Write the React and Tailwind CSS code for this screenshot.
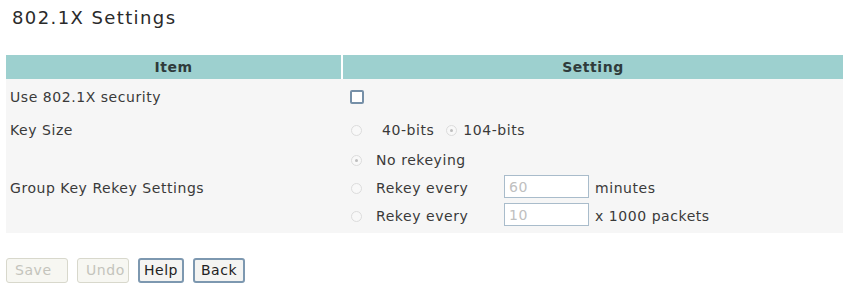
import { useState } from 'react';

function Radio({ checked }) {
  return (
    <span className="inline-flex w-[11px] h-[11px] rounded-full border border-[#dcdcdc] bg-[#f8f8f8] items-center justify-center shrink-0">
      {checked && <span className="w-[3px] h-[3px] rounded-full bg-[#bdbdbd]"></span>}
    </span>
  );
}

function Btn({ label, disabled, w }) {
  return (
    <button
      className={
        disabled
          ? `h-[25px] ${w} rounded-[3px] border border-[#d8d8cc] bg-[#f7f7f2] text-[#c4c4bc] text-left pl-[8px]`
          : `h-[25px] ${w} rounded-[3px] border-2 border-[#7d98b0] bg-[#f4f4f2] text-[#222] text-center`
      }
    >
      {label}
    </button>
  );
}

export default function App() {
  const [useSecurity, setUseSecurity] = useState(false);

  return (
    <div className="w-[853px] h-[301px] bg-white font-['DejaVu_Sans',sans-serif] text-[14px] tracking-[0.55px] text-[#3a3a3a]">
      <h1 className="pt-[6px] pl-[12px] text-[18px] tracking-[1.4px] text-[#2a2a2a] leading-[24px]">802.1X Settings</h1>

      <div className="mt-[25px] ml-[6px] w-[837px]">
        <div className="flex gap-[2px] h-[24px] font-bold text-[#2f3b3b]">
          <div className="w-[335px] bg-[#9dd0cf] flex items-center justify-center">Item</div>
          <div className="flex-1 bg-[#9dd0cf] flex items-center justify-center">Setting</div>
        </div>

        <div className="bg-[#f6f6f6] pb-[1px]">
          <div className="flex h-[36px] items-center">
            <div className="w-[337px] pl-[4px]">Use 802.1X security</div>
            <div className="pl-[7px]">
              <span
                onClick={() => setUseSecurity(!useSecurity)}
                className="block w-[14px] h-[14px] rounded-[2px] border-2 border-[#7690a8] bg-white"
              ></span>
            </div>
          </div>

          <div className="flex h-[30px] items-center">
            <div className="w-[337px] pl-[4px]">Key Size</div>
            <div className="pl-[8px] flex items-center">
              <Radio />
              <span className="ml-[20px]">40-bits</span>
              <span className="ml-[12px] flex">
                <Radio checked />
              </span>
              <span className="ml-[6px]">104-bits</span>
            </div>
          </div>

          <div className="flex h-[87px] items-center">
            <div className="w-[337px] pl-[4px]">Group Key Rekey Settings</div>
            <div className="pl-[8px] flex flex-col">
              <div className="flex items-center h-[28px]">
                <Radio checked />
                <span className="ml-[14px]">No rekeying</span>
              </div>
              <div className="flex items-center h-[28px]">
                <Radio />
                <span className="ml-[14px] w-[128px]">Rekey every</span>
                <input
                  disabled
                  defaultValue="60"
                  className="w-[85px] h-[23px] -mt-[4px] border border-[#a9bccb] bg-white text-[#c0c0c0] pl-[4px] outline-none"
                />
                <span className="ml-[6px]">minutes</span>
              </div>
              <div className="flex items-center h-[28px]">
                <Radio />
                <span className="ml-[14px] w-[128px]">Rekey every</span>
                <input
                  disabled
                  defaultValue="10"
                  className="w-[85px] h-[23px] -mt-[4px] border border-[#a9bccb] bg-white text-[#c0c0c0] pl-[4px] outline-none"
                />
                <span className="ml-[6px]">x 1000 packets</span>
              </div>
            </div>
          </div>
        </div>
      </div>

      <div className="mt-[25px] ml-[6px] flex gap-[9px]">
        <Btn label="Save" disabled w="w-[62px]" />
        <Btn label="Undo" disabled w="w-[52px]" />
        <Btn label="Help" w="w-[46px]" />
        <Btn label="Back" w="w-[52px]" />
      </div>
    </div>
  );
}
